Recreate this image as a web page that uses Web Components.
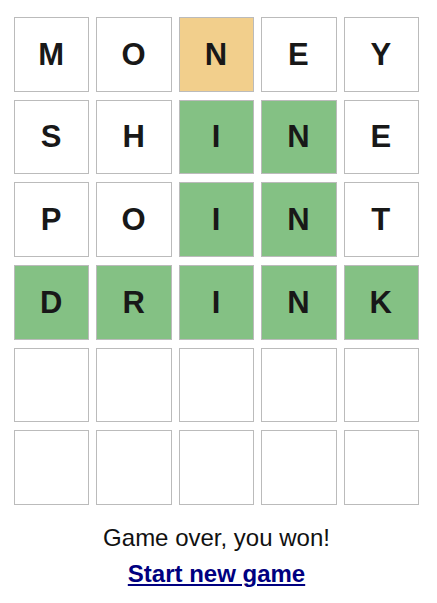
<!DOCTYPE html>
<html lang="en">
<head>
<meta charset="utf-8">
<title>Word game</title>
<style>
body { margin: 0; background: #fff; color: #111; font-family: "Liberation Sans", Arial, sans-serif; }
</style>
</head>
<body>
<word-game></word-game>
<script>
class LetterTile extends HTMLElement {
  constructor() {
    super();
    this.attachShadow({ mode: "open" }).innerHTML = `
      <style>
        :host { display: flex; align-items: center; justify-content: center; box-sizing: border-box; padding: 1px 1px 0 0;
          min-width: 0; min-height: 0; border: 1px solid #bbb; font-size: 31px; line-height: 36px; font-weight: bold; color: #181818; }
        :host([state="present"]) { background: #f2cf8c; }
        :host([state="correct"]) { background: #84c184; }
      </style><slot></slot>`;
  }
}
customElements.define("letter-tile", LetterTile);

class GuessRow extends HTMLElement {
  connectedCallback() {
    const word = (this.getAttribute("word") || "").padEnd(5);
    const marks = (this.getAttribute("marks") || "").padEnd(5);
    const states = { c: "correct", p: "present" };
    const root = this.shadowRoot || this.attachShadow({ mode: "open" });
    root.innerHTML = `<style>:host { display: grid; grid-template-columns: repeat(5, minmax(0, 1fr)); column-gap: 7px; min-height: 0; }</style>` +
      [...word].map((c, i) => `<letter-tile state="${states[marks[i]] || "none"}">${c.trim()}</letter-tile>`).join("");
  }
}
customElements.define("guess-row", GuessRow);

class GameMessage extends HTMLElement {
  constructor() {
    super();
    this.attachShadow({ mode: "open" }).innerHTML = `
      <style>
        :host { display: block; text-align: center; font-size: 24px; line-height: 36px; }
        p { margin: 0; }
        a { color: #000080; font-weight: bold; text-decoration: underline; }
      </style>
      <p><slot></slot></p><p><a href="#">Start new game</a></p>`;
  }
}
customElements.define("game-message", GameMessage);

class WordGame extends HTMLElement {
  constructor() {
    super();
    this.attachShadow({ mode: "open" }).innerHTML = `
      <style>
        :host { display: block; padding: 17px 18px 10px 14px; }
        .board { display: grid; grid-template-rows: repeat(6, minmax(0, 1fr)); row-gap: 8px; aspect-ratio: 405 / 488; }
        game-message { margin-top: 15px; }
      </style>
      <div class="board">
        <guess-row word="MONEY" marks="--p--"></guess-row>
        <guess-row word="SHINE" marks="--cc-"></guess-row>
        <guess-row word="POINT" marks="--cc-"></guess-row>
        <guess-row word="DRINK" marks="ccccc"></guess-row>
        <guess-row></guess-row>
        <guess-row></guess-row>
      </div>
      <game-message>Game over, you won!</game-message>`;
  }
}
customElements.define("word-game", WordGame);
</script>
</body>
</html>
